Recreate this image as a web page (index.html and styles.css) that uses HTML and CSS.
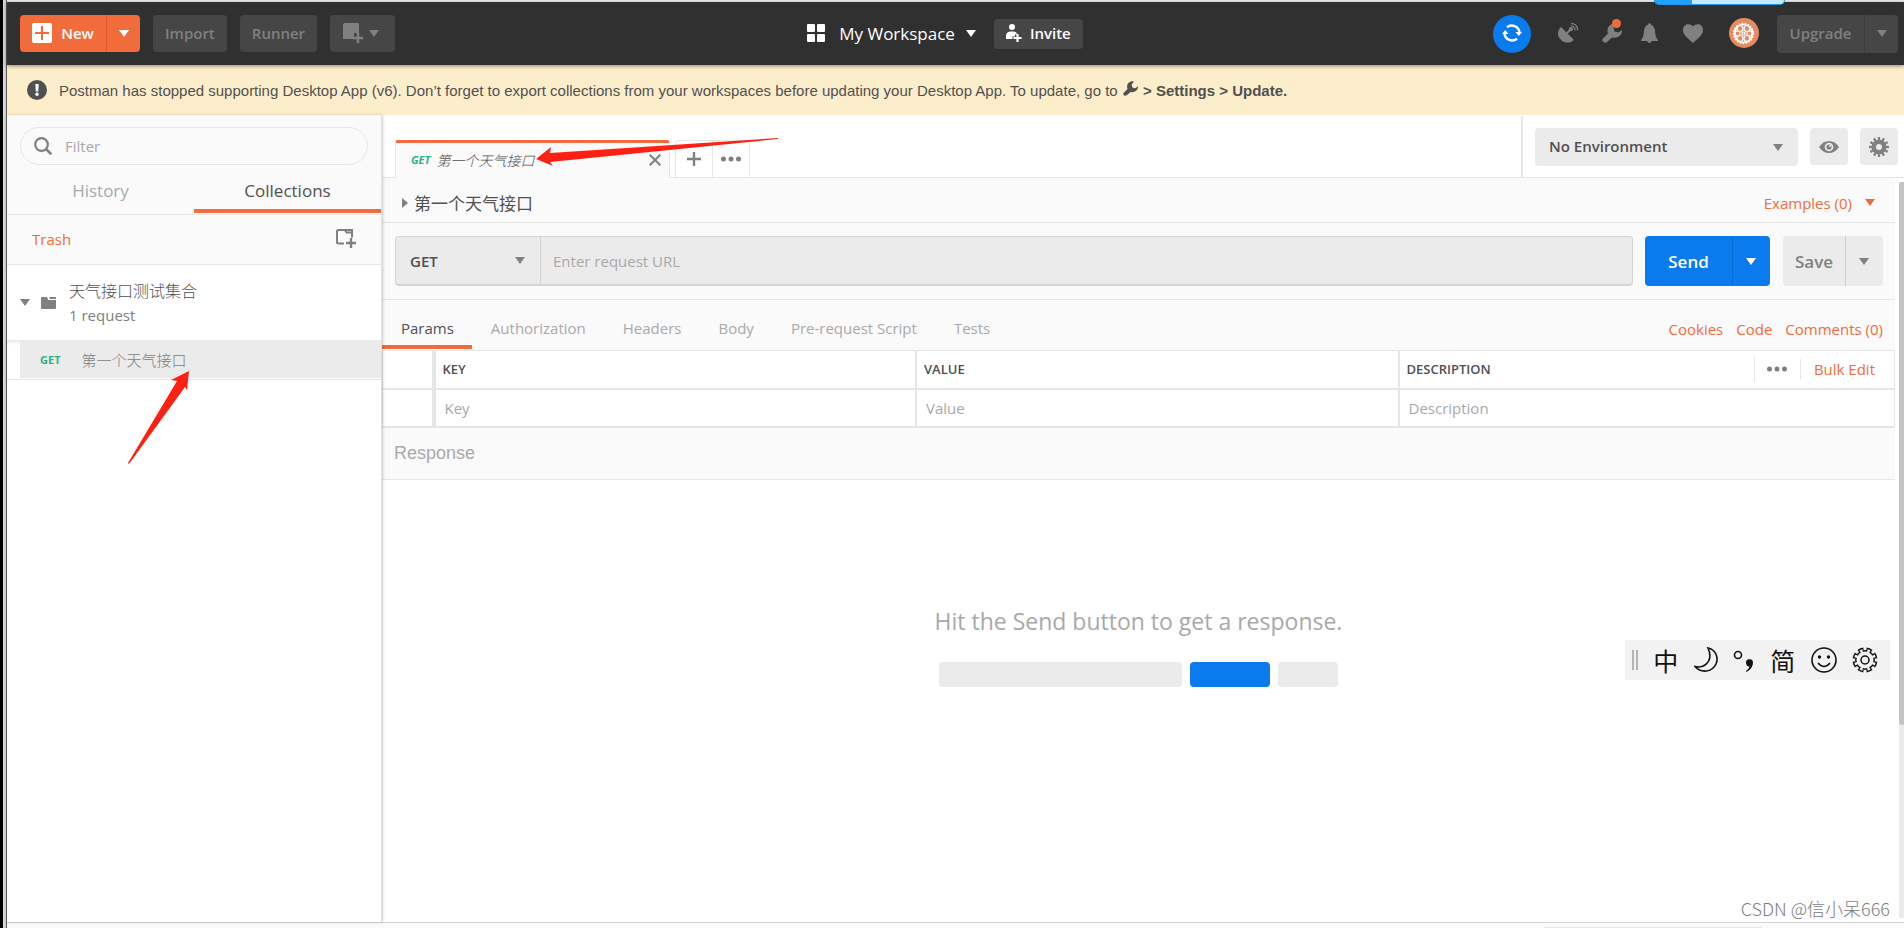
FILE: index.html
```html
<!DOCTYPE html>
<html lang="zh-CN">
<head>
<meta charset="utf-8">
<title>Postman</title>
<link rel="stylesheet" href="styles.css">
</head>
<body>
<svg class="symbols" aria-hidden="true">
  <symbol id="caret" viewBox="0 0 10 7"><path d="M0 0h10L5 7z"/></symbol>
  <symbol id="wrench" viewBox="0 0 20 20"><path d="M1 15.500 6 10.500C4 5 8 0 13.500.5L14.500 1 11.500 4.500 12.500 8.500 16.500 9.500 20 7C20.500 12.500 15 16 10 14.500L5 19Q3 20.500 1 18.500-.500 17 1 15.500z"/></symbol>
  <symbol id="dots" viewBox="0 0 20 6"><circle cx="2.500" cy="3" r="2.500"/><circle cx="10" cy="3" r="2.500"/><circle cx="17.500" cy="3" r="2.500"/></symbol>
</svg>
<div class="page">
  <div class="window-top"><span class="progress"></span></div>

  <header class="topbar">
    <div class="top-left">
      <div class="split new-split">
        <button class="new-btn"><svg width="20" height="20" viewBox="0 0 20 20"><rect width="20" height="20" rx="2" fill="#fff"/><path d="M10 3v14M3 10h14" stroke="#f26b3a" stroke-width="2"/></svg>New</button>
        <button class="split-arrow" aria-label="New options"><svg class="caret"><use href="#caret"/></svg></button>
      </div>
      <button class="dark-btn">Import</button>
      <button class="dark-btn">Runner</button>
      <button class="dark-btn window-btn" aria-label="New window"><svg width="20" height="20" viewBox="0 0 20 20"><path d="M2 0h13q1 0 1 1v9h-5v6H0V2q0-2 2-2z"/><path d="M15 10v10M10 15h10" stroke="#808080" stroke-width="2.500"/></svg><svg class="caret"><use href="#caret"/></svg></button>
    </div>
    <div class="top-center">
      <button class="workspace"><svg width="18" height="18" viewBox="0 0 18 18"><rect width="8" height="8" rx="1"/><rect x="10" width="8" height="8" rx="1"/><rect y="10" width="8" height="8" rx="1"/><rect x="10" y="10" width="8" height="8" rx="1"/></svg>My Workspace<svg class="caret"><use href="#caret"/></svg></button>
      <button class="invite"><svg width="16" height="18" viewBox="0 0 16 18"><circle cx="6" cy="3" r="3"/><path d="M0 15v-3q0-4 4-4.500h4q3 .5 3 3H9v2H6.500V15z"/><path d="M11.500 10v8M7.500 14h8" stroke="#fff" stroke-width="2.200"/></svg>Invite</button>
    </div>
    <div class="top-right">
      <button class="sync" aria-label="Sync"><svg width="20" height="20" viewBox="0 0 20 20"><path d="M5 4.200A7.800 7.800 0 0 1 17.500 9M15 15.800A7.800 7.800 0 0 1 2.500 11" fill="none" stroke="#fff" stroke-width="2.400"/><path d="M13.500 9h6.500l-3.200 4zM0 11h6.500L3.200 7z"/></svg></button>
      <button class="glyph satellite" aria-label="Capture"><svg width="20" height="20" viewBox="0 0 20 20"><path d="M3 4 16 17Q12 21 6 19-2 14 .5 7.500 1.500 5 3 4z"/><path d="m8 11 5-5" stroke="#808080" stroke-width="2"/><circle cx="13" cy="6" r="2"/><path d="M13 3q4 0 4 4.500M13 .7q6.500 0 6.500 6.500" fill="none" stroke="#808080" stroke-width="1.200"/></svg></button>
      <button class="glyph settings" aria-label="Settings"><svg width="20" height="20"><use href="#wrench"/></svg><i class="badge"></i></button>
      <button class="glyph bell" aria-label="Notifications"><svg width="17" height="20" viewBox="0 0 17 20"><path d="M7 1.500q1.500-3 3 0Q13.500 3 14 8c.3 4 .8 7 3 9v1H0v-1c2.200-2 2.700-5 3-9Q3.500 3 7 1.500zM6 18h5q-2.500 4-5 0z"/></svg></button>
      <button class="glyph heart" aria-label="Favourites"><svg width="20" height="19" viewBox="0 0 20 19"><path d="M10 2.500C13-1.500 20-.5 20 6c0 5-4 7.500-10 13C4 13.500 0 11 0 6 0-.5 7-1.500 10 2.500z"/></svg></button>
      <button class="avatar" aria-label="Account"><svg width="30" height="30" viewBox="0 0 30 30" fill="none" stroke="#fff"><circle cx="15" cy="15" r="15" fill="#e58a62" stroke="none"/><circle cx="14.500" cy="15.500" r="9" stroke-width="1.600"/><circle cx="14.500" cy="15.500" r="10" stroke-width="1.600" stroke-dasharray="1.500 1.500"/><g stroke-width="1.200"><circle cx="14.500" cy="15.500" r="1.500"/><circle cx="11" cy="10.500" r="3"/><circle cx="18" cy="10.500" r="3"/><circle cx="8.500" cy="15.500" r="2.500"/><circle cx="20.500" cy="15.500" r="2.500"/><circle cx="11" cy="20.500" r="3"/><circle cx="18" cy="20.500" r="3"/></g></svg></button>
      <div class="split upgrade-split">
        <button class="upgrade-btn">Upgrade</button>
        <button class="split-arrow" aria-label="Upgrade options"><svg class="caret"><use href="#caret"/></svg></button>
      </div>
    </div>
  </header>

  <div class="banner" role="status">
    <svg width="20" height="20" viewBox="0 0 20 20"><circle cx="10" cy="10" r="10"/><path d="M8.300 4h3.400l-.5 7.500H8.800z" fill="#fff"/><circle cx="10" cy="14.300" r="1.700" fill="#fff"/></svg>
    <p>Postman has stopped supporting Desktop App (v6). Don’t forget to export collections from your workspaces before updating your Desktop App. To update, go to <svg class="inline-wrench" width="15" height="15"><use href="#wrench"/></svg> <b>&gt; Settings &gt; Update.</b></p>
  </div>

  <div class="workspace-area">
    <aside class="sidebar">
      <div class="side-head">
        <label class="filter"><svg width="18" height="18" viewBox="0 0 18 18" fill="none" stroke="#808080"><circle cx="7.500" cy="7.500" r="6.300" stroke-width="2.200"/><path d="m12 12 5.300 5.300" stroke-width="2.600"/></svg><input type="text" placeholder="Filter" aria-label="Filter"></label>
        <nav class="side-tabs"><button>History</button><button class="active">Collections</button></nav>
      </div>
      <div class="trash-row"><a href="#trash">Trash</a><button class="glyph" aria-label="New collection"><svg width="20" height="20" viewBox="0 0 20 20" fill="none" stroke="#808080" stroke-width="2"><path d="M8 14.500H2.500Q1 14.500 1 13V2.500Q1 1 2.500 1H16v7.500M9 1l1.500 2.500H16"/><path d="M15 9v10M10 14h10" stroke-width="2.400"/></svg></button></div>
      <div class="collection">
        <svg class="caret"><use href="#caret"/></svg>
        <svg class="folder" width="15" height="12" viewBox="0 0 15 12"><path d="M0 1q0-1 1-1h5l1.500 3H15v8q0 1-1 1H1q-1 0-1-1zM8 0h6q1 0 1 1v1H9z"/></svg>
        <div><div class="collection-name">天气接口测试集合</div><div class="collection-count">1 request</div></div>
      </div>
      <div class="requests"><button class="request"><span class="method">GET</span><span>第一个天气接口</span></button></div>
    </aside>

    <main class="main">
      <div class="tabs-row">
        <div class="tab"><span class="method">GET</span><span class="tab-name">第一个天气接口</span><button aria-label="Close tab"><svg width="12" height="12" viewBox="0 0 12 12"><path d="m.7.7 10.600 10.600M11.300.7.700 11.300" stroke="#808080" stroke-width="2"/></svg></button></div>
        <div class="tab-tools">
          <button aria-label="Add tab"><svg width="14" height="14" viewBox="0 0 14 14"><path d="M7 0v14M0 7h14" stroke="#808080" stroke-width="2.400"/></svg></button>
          <button aria-label="More tabs"><svg width="20" height="6"><use href="#dots"/></svg></button>
        </div>
        <div class="environment">
          <div class="pick env-pick"><select aria-label="Environment"><option>No Environment</option></select><svg class="caret"><use href="#caret"/></svg></div>
          <button class="env-btn" aria-label="Environment quick look"><svg width="20" height="12" viewBox="0 0 20 12"><path d="M0 6Q4 0 10 0t10 6q-4 6-10 6T0 6z"/><circle cx="10" cy="6" r="4.300" fill="#ebebeb"/><circle cx="10" cy="6" r="2.600"/><circle cx="11" cy="5" r="1" fill="#ebebeb"/></svg></button>
          <button class="env-btn" aria-label="Manage environments"><svg width="20" height="20" viewBox="0 0 20 20" fill="none" stroke="#808080"><circle cx="10" cy="10" r="5.300" stroke-width="4.600"/><circle cx="10" cy="10" r="8.500" stroke-width="3" pathLength="120" stroke-dasharray="5 5" stroke-dashoffset="2.500"/></svg></button>
        </div>
      </div>

      <div class="scroller">
        <div class="content">
          <div class="title-row">
            <button class="title"><svg width="6" height="10" viewBox="0 0 6 10"><path d="M0 0v10l6-5z"/></svg>第一个天气接口</button>
            <button class="orange-link examples">Examples (0)<svg class="caret"><use href="#caret"/></svg></button>
          </div>

          <div class="url-row">
            <div class="url-box">
              <div class="pick method-pick"><select aria-label="Method"><option>GET</option></select><svg class="caret"><use href="#caret"/></svg></div>
              <input type="text" placeholder="Enter request URL" aria-label="Request URL">
            </div>
            <div class="split send-split"><button class="send-btn">Send</button><button class="split-arrow" aria-label="Send options"><svg class="caret"><use href="#caret"/></svg></button></div>
            <div class="split save-split"><button class="save-btn">Save</button><button class="split-arrow" aria-label="Save options"><svg class="caret"><use href="#caret"/></svg></button></div>
          </div>

          <div class="sub-row">
            <nav class="sub-tabs"><button class="active">Params</button><button>Authorization</button><button>Headers</button><button>Body</button><button>Pre-request Script</button><button>Tests</button></nav>
            <div class="sub-links"><a href="#cookies">Cookies</a><a href="#code">Code</a><a href="#comments">Comments (0)</a></div>
          </div>

          <table class="params">
            <colgroup><col class="col-check"><col><col><col class="col-desc"></colgroup>
            <thead><tr><th></th><th>KEY</th><th>VALUE</th><th><div class="desc-head"><span>DESCRIPTION</span><button class="more" aria-label="Columns"><svg width="20" height="6"><use href="#dots"/></svg></button><button class="bulk">Bulk Edit</button></div></th></tr></thead>
            <tbody><tr><td></td><td><input type="text" placeholder="Key" aria-label="Key"></td><td><input type="text" placeholder="Value" aria-label="Value"></td><td><input type="text" placeholder="Description" aria-label="Description"></td></tr></tbody>
          </table>

          <h2 class="response-title">Response</h2>
          <div class="empty">
            <p>Hit the Send button to get a response.</p>
            <div class="bars"><span class="bar-url"></span><span class="bar-send"></span><span class="bar-save"></span></div>
          </div>
        </div>
        <div class="scrollbar"><div class="thumb"></div><div class="rest"></div></div>
      </div>
    </main>
  </div>
  <footer class="statusbar"><span></span></footer>
</div>

<svg class="arrow arrow-tab" width="244" height="32" viewBox="0 0 244 32"><path d="M0 22 15 10l-1 6L242 1v1L14 25l3 4z"/></svg>
<svg class="arrow arrow-request" width="62" height="94" viewBox="0 0 62 94"><path d="M61 0 43 9l6 1L0 92l1 1 56-77 2 3z"/></svg>

<div class="ime">
  <i></i>
  <span>中</span>
  <svg width="24" height="26" viewBox="0 0 24 26" fill="none" stroke="#111" stroke-width="1.600"><path d="M14 1Q19 12 11 18q-4 3-10 1.500c6 7 17 6 21-2.500C25 9.500 21 2.500 14 1z"/></svg>
  <svg width="22" height="26" viewBox="0 0 22 26"><circle cx="5" cy="8" r="3.500" fill="none" stroke="#111" stroke-width="1.600"/><path d="M13 16a3.500 3.500 0 1 1 7-.5q0 6-6.500 9.500l-.5-1q3-2 3.500-4.500-3 .2-3.500-3.500z" fill="#111"/></svg>
  <span>简</span>
  <svg width="26" height="26" viewBox="0 0 26 26"><circle cx="13" cy="13" r="12" fill="none" stroke="#111" stroke-width="1.600"/><circle cx="8.500" cy="10" r="1.700" fill="#111"/><circle cx="17.500" cy="10" r="1.700" fill="#111"/><path d="M7 16q6 7 12 0" fill="none" stroke="#111" stroke-width="1.600"/></svg>
  <svg width="26" height="26" viewBox="0 0 26 26" fill="none"><circle cx="13" cy="13" r="10" fill="#111"/><circle cx="13" cy="13" r="11" stroke="#111" stroke-width="3" pathLength="80" stroke-dasharray="6.400 3.600" stroke-dashoffset="-1.800"/><circle cx="13" cy="13" r="8.500" fill="#f2f2f2"/><circle cx="13" cy="13" r="9.500" stroke="#f2f2f2" stroke-width="3" pathLength="80" stroke-dasharray="3.400 6.600" stroke-dashoffset="-3.300"/><circle cx="13" cy="13" r="4" stroke="#111" stroke-width="1.500"/></svg>
</div>
<div class="watermark">CSDN @信小呆666</div>
</body>
</html>
```
FILE: styles.css
```css
* { box-sizing: border-box; }
body {
  margin: 0;
  font-family: "Open Sans", "Noto Sans CJK SC", sans-serif;
  font-size: 15px;
  color: #505050;
  background: #fff;
}
button, input, select {
  font: inherit;
  color: inherit;
  border: 0;
  padding: 0;
  margin: 0;
  background: none;
  outline: 0;
}
button { display: flex; align-items: center; justify-content: center; white-space: nowrap; }
svg { display: block; fill: currentColor; flex: none; }
svg[fill="none"] { fill: none; }
a { color: #f26b3a; text-decoration: none; }
p { margin: 0; }
::placeholder { color: #a9a9a9; opacity: 1; }
.symbols { position: absolute; width: 0; height: 0; }
.caret { width: 10px; height: 7px; }

.page {
  display: flex;
  flex-direction: column;
  height: 100vh;
  padding-left: 7px;
  background: linear-gradient(to right, #000 3px, #dcdcdc 3px, #c8c8c8 6px, #5a5a5a 6px, #5a5a5a 7px, #fff 7px);
}
.window-top { height: 2px; background: #eceff1; position: relative; }
.progress {
  position: absolute;
  right: 119px;
  top: 0;
  z-index: 3;
  width: 131px;
  height: 5px;
  border: solid #1b95f0;
  border-width: 0 1px 1px;
  border-radius: 0 0 5px 5px;
  background: linear-gradient(to right, #22a2ff 37px, #c4eaff 37px);
}

.topbar {
  display: grid;
  grid-template-columns: 1fr auto 1fr;
  align-items: center;
  height: 63px;
  padding: 0 6px 0 13px;
  background: #303030;
  color: #808080;
  font-weight: 600;
  position: relative;
  z-index: 2;
  box-shadow: 0 1px 4px rgba(0, 0, 0, .45);
}
.topbar button { padding-bottom: 1px; }
.top-left, .top-center, .top-right { display: flex; align-items: center; }
.top-left { gap: 13px; }
.split { display: flex; border-radius: 4px; overflow: hidden; }
.split-arrow { border-left: 1px solid rgba(0, 0, 0, .12); width: 34px; }
.new-split { height: 37px; background: #f26b3a; color: #fff; }
.new-btn { width: 86px; gap: 9px; }
.dark-btn { height: 37px; padding: 0 12px; border-radius: 4px; background: #464646; }
.window-btn { gap: 6px; padding: 0 16px 0 13px; }
.top-center { gap: 18px; padding-right: 28px; color: #fff; }
.workspace { gap: 14px; font-size: 17px; font-weight: 400; }
.workspace .caret { margin-left: -3px; }
.invite { height: 30px; padding: 0 12px; gap: 8px; border-radius: 4px; background: #464646; }
.top-right { justify-content: flex-end; }
.sync { width: 38px; height: 38px; border-radius: 50%; background: #097bed; color: #fff; margin-right: 27px; }
.glyph { color: #808080; position: relative; }
.satellite { margin-right: 24px; }
.settings { margin-right: 19px; }
.bell { margin-right: 25px; }
.heart { margin-right: 26px; }
.avatar { margin-right: 18px; }
.badge { position: absolute; top: -4px; right: 1px; width: 9px; height: 9px; border-radius: 50%; background: #f26b3a; }
.upgrade-split { height: 38px; background: #464646; }
.upgrade-btn { width: 87px; }

.banner {
  display: flex;
  align-items: center;
  gap: 12px;
  height: 50px;
  padding: 0 20px;
  background: #fdeecb;
  color: #505050;
  font-family: "Liberation Sans", Arial, sans-serif;
  white-space: nowrap;
}
.inline-wrench { display: inline-block; margin: 0 1px; }

.workspace-area { flex: 1; display: flex; min-height: 0; }
.sidebar {
  width: 375px;
  flex: none;
  position: relative;
  z-index: 1;
  background: #fff;
  border-right: 1px solid #dedede;
  box-shadow: 1px 0 3px rgba(0, 0, 0, .18);
}
.side-head { background: #fafafa; border-bottom: 1px solid #e6e6e6; padding-top: 12px; }
.filter {
  display: flex;
  align-items: center;
  gap: 13px;
  height: 38px;
  margin: 0 13px;
  padding: 0 14px 0 13px;
  border: 1px solid #e6e6e6;
  border-radius: 19px;
}
.filter input { flex: 1; min-width: 0; }
.side-tabs { display: flex; height: 49px; font-size: 17px; color: #a9a9a9; }
.side-tabs button { flex: 1; padding-top: 6px; border-bottom: 4px solid transparent; margin-bottom: 1px; }
.side-tabs .active { color: #505050; border-bottom-color: #f26b3a; }
.trash-row {
  display: flex;
  align-items: center;
  justify-content: space-between;
  height: 50px;
  padding: 0 25px 2px;
  background: #fafafa;
  border-bottom: 1px solid #e6e6e6;
}
.collection { display: flex; align-items: center; height: 75px; padding: 0 13px; color: #808080; }
.folder { margin: 0 13px 0 11px; }
.collection-name { font-family: "Noto Sans CJK SC", sans-serif; font-size: 16px; font-weight: 300; line-height: 24px; color: #505050; }
.collection-count { font-size: 15px; line-height: 26px; }
.requests { padding: 0 0 1px 13px; border-bottom: 1px solid #e6e6e6; box-shadow: inset 0 4px 4px -3px rgba(0, 0, 0, .15); }
.request { width: 100%; height: 38px; justify-content: flex-start; gap: 21px; padding-left: 20px; background: #ebebeb; color: #808080; font-weight: 300; }
.method { font-size: 11px; font-weight: 700; color: #26b47f; }

.main { flex: 1; min-width: 0; display: flex; flex-direction: column; }
.tabs-row { display: flex; height: 63px; padding-left: 13px; align-items: flex-end; box-shadow: inset 0 -1px #e6e6e6; }
.tab {
  display: flex;
  align-items: center;
  width: 275px;
  height: 38px;
  padding: 0 8px 2px 15px;
  border: 1px solid #e6e6e6;
  border-top: 3px solid #f26b3a;
  border-bottom: 0;
  border-radius: 3px 3px 0 0;
  background: #fafafa;
}
.tab .method { font-style: italic; }
.tab-name { flex: 1; padding-left: 6px; font-size: 14px; font-style: italic; font-weight: 300; }
.tab-tools { display: flex; height: 38px; margin-left: 5px; border: 1px solid #e6e6e6; border-radius: 3px 3px 0 0; color: #808080; }
.tab-tools button { width: 36px; }
.tab-tools button + button { border-left: 1px solid #e6e6e6; width: 37px; }
.environment { display: flex; height: 62px; align-items: flex-start; gap: 12px; margin-left: auto; padding: 12px 6px 0 12px; border-left: 2px solid #e6e6e6; }
.pick { display: grid; align-items: center; }
.pick select, .pick .caret { grid-area: 1 / 1; }
.pick select { appearance: none; height: 100%; padding: 0 0 2px 14px; font-weight: 600; }
.pick .caret { justify-self: end; margin-right: 15px; color: #808080; pointer-events: none; }
.env-pick { width: 263px; height: 38px; border-radius: 4px; background: #ebebeb; }
.env-btn { width: 38px; height: 37px; border-radius: 4px; background: #ebebeb; color: #808080; }

.scroller { flex: 1; display: flex; min-height: 0; }
.content { flex: 1; min-width: 0; display: flex; flex-direction: column; }
.scrollbar { width: 5px; margin: 4px 0 4px 4px; background: #ebebeb; display: flex; flex-direction: column; }
.thumb { flex: 543; background: #c4c4c4; border-radius: 3px 0 0 3px; }
.rest { flex: 193; }
.title-row, .url-row { display: flex; align-items: center; background: #fafafa; border-bottom: 1px solid #e6e6e6; }
.title-row { height: 45px; padding: 5px 20px 0; justify-content: space-between; }
.title { gap: 6px; font-size: 17px; font-weight: 400; }
.title svg { color: #808080; }
.orange-link { color: #f26b3a; gap: 13px; }
.url-row { height: 77px; padding: 0 12px 0 13px; }
.url-box { flex: 1; display: flex; height: 50px; border: 1px solid #d4d4d4; border-bottom-width: 2px; border-radius: 4px; background: #ebebeb; }
.url-box input { flex: 1; min-width: 0; padding: 0 12px; }
.method-pick { width: 145px; border-right: 1px solid #d4d4d4; }
.method-pick select { padding-bottom: 0; }
.send-split { height: 50px; margin: 0 13px 0 12px; background: #097bed; color: #fff; font-size: 17px; font-weight: 600; }
.send-btn { width: 87px; }
.send-split .split-arrow, .save-split .split-arrow { width: 38px; padding-right: 2px; }
.save-split { height: 50px; background: #ebebeb; color: #808080; font-size: 17px; font-weight: 600; }
.save-btn { width: 62px; }
.sub-row { display: flex; justify-content: space-between; align-items: stretch; height: 50px; background: #fafafa; }
.sub-tabs { display: flex; color: #a9a9a9; }
.sub-tabs button { padding: 11px 18px 0 19px; border-bottom: 4px solid transparent; margin-bottom: 1px; }
.sub-tabs .active { color: #505050; border-bottom-color: #f26b3a; }
.sub-links { display: flex; align-items: center; gap: 13px; padding: 8px 12px 0 0; }

.params { width: 100%; table-layout: fixed; border-collapse: collapse; }
.col-check { width: 51px; }
.col-desc { width: 496px; }
.params th, .params td { height: 38px; padding: 0; text-align: left; border: 2px solid #e6e6e6; border-left-width: 1px; background: #fff; }
.params th { border-top-width: 1px; padding-left: 7px; font-size: 13px; font-weight: 600; }
.params td { padding-left: 9px; }
.params th:first-child, .params td:first-child { border-right-width: 4px; }
.params th:nth-child(4), .params td:nth-child(4) { border-right-width: 1px; }
.params input { width: 100%; display: block; }
.desc-head { display: flex; align-items: center; }
.desc-head span { flex: 1; }
.more { width: 46px; height: 26px; border-left: 1px solid #e6e6e6; color: #808080; }
.bulk { height: 20px; border-left: 1px solid #e6e6e6; padding: 0 19px 0 13px; color: #f26b3a; font-size: 15px; font-weight: 400; }
.response-title { margin: 0; padding: 0 12px; height: 52px; line-height: 50px; background: #fafafa; border-bottom: 1px solid #e6e6e6; color: #a9a9a9; font-family: "Liberation Sans", Arial, sans-serif; font-size: 18px; font-weight: 400; }
.empty { flex: 1; display: flex; flex-direction: column; align-items: center; justify-content: center; gap: 25px; padding-bottom: 110px; font-size: 23px; line-height: 32px; color: #a9a9a9; }
.bars { display: flex; gap: 8px; width: 399px; height: 25px; }
.bars span { border-radius: 4px; background: #ebebeb; }
.bar-url { flex: 1; }
.bars .bar-send { width: 80px; background: #097bed; }
.bar-save { width: 60px; }

.statusbar { height: 6px; border-top: 1px solid #d4d4d4; background: #fafafa; display: flex; justify-content: flex-end; align-items: flex-end; }
.statusbar span { width: 218px; height: 1px; margin-right: 142px; background: #e6e6e6; }

.arrow { position: absolute; z-index: 5; color: #ff2014; pointer-events: none; }
.arrow-tab { left: 536px; top: 137px; }
.arrow-request { left: 128px; top: 371px; }
.ime {
  position: absolute;
  z-index: 5;
  right: 14px;
  top: 640px;
  display: flex;
  align-items: center;
  justify-content: space-between;
  width: 265px;
  height: 40px;
  padding: 0 12px 0 7px;
  background: #f2f2f2;
  color: #111;
  font-family: "Noto Sans CJK SC", sans-serif;
  font-size: 25px;
}
.ime i { width: 6px; height: 20px; border: solid #b4b4b4; border-width: 0 2px; }
.watermark {
  position: absolute;
  z-index: 5;
  right: 14px;
  bottom: 7px;
  font-family: "Noto Sans CJK SC", sans-serif;
  font-size: 18px;
  font-weight: 300;
  line-height: 26px;
  color: #808080;
}
```
